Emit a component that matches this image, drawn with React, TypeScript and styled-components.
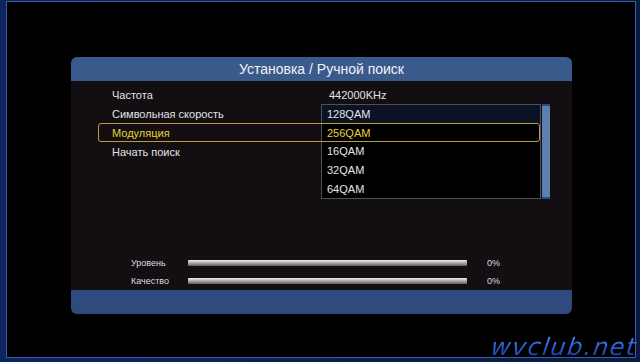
import styled, { createGlobalStyle } from 'styled-components'

const GlobalStyle = createGlobalStyle`
    html, body {
        margin: 0;
        padding: 0;
        background: #000;
    }
    body {
        font-family: "Liberation Sans", Arial, sans-serif;
    }
`

const Screen = styled.div`
    position: relative;
    width: 640px;
    height: 362px;
    box-sizing: border-box;
    padding: 1px 4px 4px 6px;
    background: linear-gradient(90deg, #0c2560 0%, #081a44 100%);
    overflow: hidden;
`

const Frame = styled.div`
    height: 100%;
    box-sizing: border-box;
    border: 1px solid #3d5c9a;
    background: #000;
    padding: 55px 0 0 64px;
`

const Panel = styled.div`
    width: 501px;
    border-radius: 6px;
    overflow: hidden;
    display: flex;
    flex-direction: column;
`

const Header = styled.div`
    height: 24px;
    background: #3a5a8c;
    color: #f2f2f2;
    font-size: 14px;
    display: flex;
    align-items: center;
    justify-content: center;
`

const Body = styled.div`
    position: relative;
    height: 209px;
    box-sizing: border-box;
    padding-top: 4px;
    background: #130e12;
    display: flex;
    flex-direction: column;
`

const Row = styled.div<{ $active?: boolean }>`
    position: relative;
    z-index: 2;
    display: grid;
    grid-template-columns: 217px 1fr;
    align-items: center;
    height: 19px;
    box-sizing: border-box;
    margin: 0 32px 0 27px;
    padding-left: 13px;
    border: 1px solid ${p => (p.$active ? '#c29a3c' : 'transparent')};
    border-radius: 3px;
    color: ${p => (p.$active ? '#e6d23a' : '#e4e4e4')};
    font-size: 11px;
`

const Dropdown = styled.div`
    position: absolute;
    z-index: 1;
    left: 250px;
    top: 23px;
    display: flex;
    height: 95px;
`

const List = styled.div`
    width: 220px;
    box-sizing: border-box;
    border: 1px solid #505058;
    background: #000;
    display: flex;
    flex-direction: column;
`

const Item = styled.div<{ $active?: boolean; $focus?: boolean }>`
    height: 18.6px;
    display: flex;
    align-items: center;
    padding-left: 5px;
    font-size: 11px;
    color: ${p => (p.$active ? '#e6d23a' : '#e4e4e4')};
    background: ${p => (p.$focus ? '#0c1226' : 'transparent')};
`

const Scrollbar = styled.div`
    width: 8px;
    margin-left: 1px;
    box-sizing: border-box;
    background: #5a7fb0;
    border-top: 2px solid #2c4a7a;
    border-bottom: 2px solid #2c4a7a;
`

const Signal = styled.div`
    margin-top: auto;
    display: flex;
    flex-direction: column;
`

const SignalRow = styled.div`
    display: grid;
    grid-template-columns: 57px 279px 1fr;
    align-items: center;
    height: 18px;
    padding-left: 60px;
    color: #dcdcdc;
    font-size: 9px;

    span:last-child {
        padding-left: 20px;
    }
`

const Bar = styled.div`
    height: 6px;
    border-radius: 1px;
    background: linear-gradient(180deg, #f0f0f0 0%, #bdbdbd 35%, #8a8a8a 70%, #5e5e5e 100%);
`

const Footer = styled.div`
    height: 24px;
    background: #2f4a7c;
`

const Watermark = styled.div`
    position: absolute;
    right: 3px;
    bottom: 3px;
    font-family: "DejaVu Sans", sans-serif;
    font-style: italic;
    font-size: 24px;
    letter-spacing: 1.5px;
    line-height: 1;
    transform: skewX(-8deg);
    background: linear-gradient(180deg, #4384f8 0%, #2656cc 60%, #173a9a 100%);
    -webkit-background-clip: text;
    background-clip: text;
    color: transparent;
`

const items = ['128QAM', '256QAM', '16QAM', '32QAM', '64QAM']

export default function App() {
    return (
        <>
            <GlobalStyle />
            <Screen>
                <Frame>
                    <Panel>
                        <Header>Установка / Ручной поиск</Header>
                        <Body>
                            <Row><span>Частота</span><span>442000KHz</span></Row>
                            <Row><span>Символьная скорость</span><span /></Row>
                            <Row $active><span>Модуляция</span><span /></Row>
                            <Row><span>Начать поиск</span><span /></Row>
                            <Dropdown>
                                <List>
                                    {items.map((it, i) => (
                                        <Item key={it} $focus={i === 0} $active={i === 1}>{it}</Item>
                                    ))}
                                </List>
                                <Scrollbar />
                            </Dropdown>
                            <Signal>
                                <SignalRow><span>Уровень</span><Bar /><span>0%</span></SignalRow>
                                <SignalRow><span>Качество</span><Bar /><span>0%</span></SignalRow>
                            </Signal>
                        </Body>
                        <Footer />
                    </Panel>
                </Frame>
                <Watermark>wvclub.net</Watermark>
            </Screen>
        </>
    )
}
